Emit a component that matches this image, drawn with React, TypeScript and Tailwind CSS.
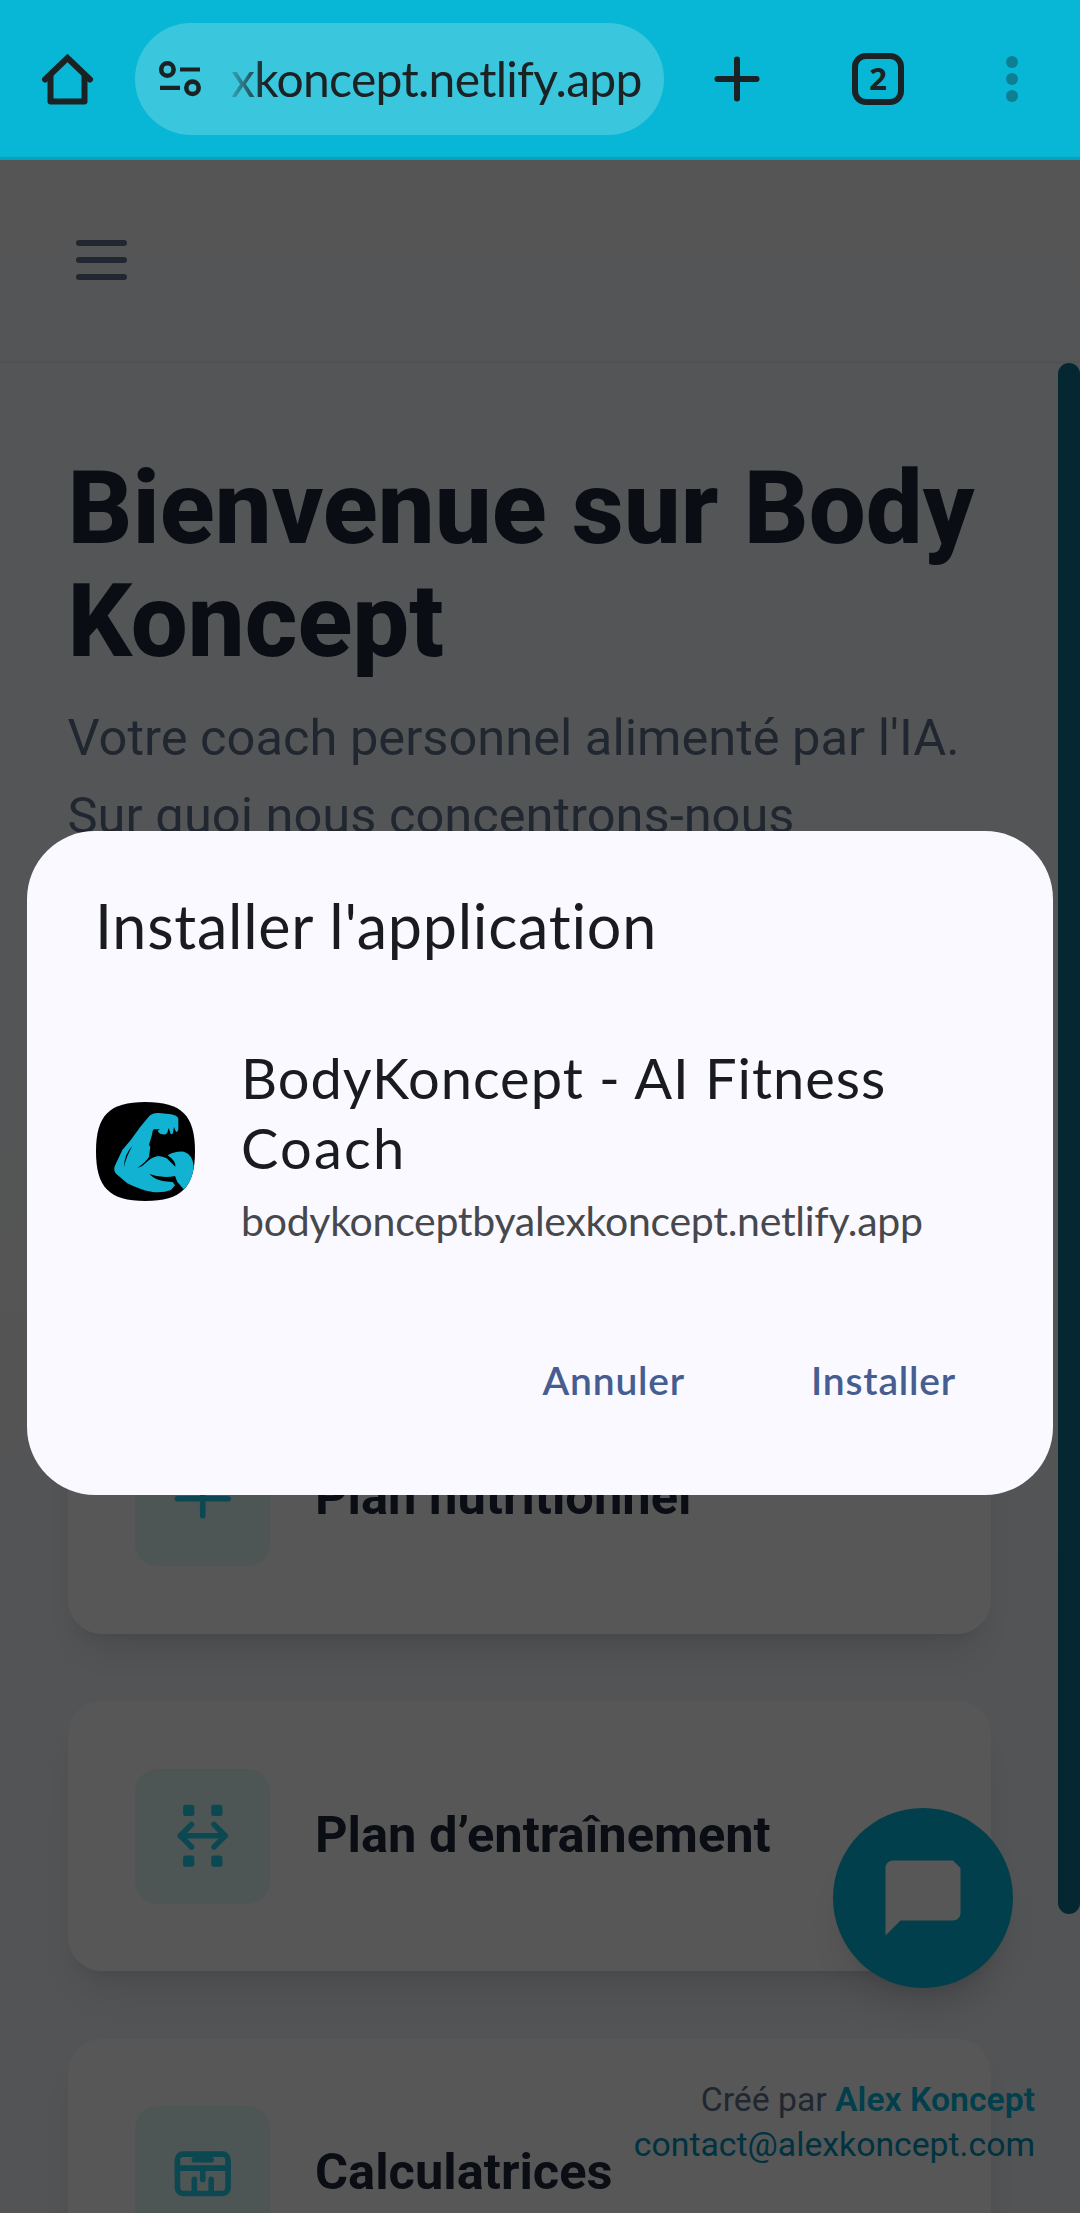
import type { ReactNode } from "react";

function HomeIcon() {
  return (
    <svg width="54" height="54" viewBox="0 0 54 54" fill="none" stroke="#1b2223" strokeWidth="6" strokeLinejoin="round" strokeLinecap="round">
      <path d="M5 27.5 27.5 6 50 27.5" strokeLinejoin="miter" />
      <path d="M10.5 24v25.5h34V24" />
    </svg>
  );
}

function TuneIcon() {
  return (
    <svg width="44" height="38" viewBox="0 0 44 38" fill="none" stroke="#1b2223" strokeWidth="4.6">
      <circle cx="9.4" cy="9.5" r="6.2" />
      <path d="M22 9.5h20M2 27.8h20" strokeWidth="4.2" />
      <circle cx="34.5" cy="27.8" r="6.2" />
    </svg>
  );
}

function BrowserBar() {
  return (
    <header className="flex h-[160px] shrink-0 items-start border-b-[3px] border-[#03a3bf] bg-[#08b6d6]">
      <div className="flex h-[157px] w-full items-center">
        <div className="ml-[40px] flex w-[95px]">
          <HomeIcon />
        </div>
        <div className="flex h-[112px] w-[529px] items-center rounded-full bg-[#3ac6dd] pl-[23px]">
          <TuneIcon />
          <div className="ml-[29px] whitespace-nowrap bg-gradient-to-r from-[#1b2223]/20 via-[#1b2223] via-[34px] to-[#1b2223] bg-clip-text font-[Lato,sans-serif] text-[48px] leading-[60px] tracking-[-0.7px] text-transparent">
            xkoncept.netlify.app
          </div>
        </div>
        <svg className="ml-[47px]" width="52" height="52" viewBox="0 0 52 52" stroke="#1b2223" strokeWidth="6" strokeLinecap="round">
          <path d="M26 6.500v39M6.500 26h39" />
        </svg>
        <div className="ml-[89px] flex h-[52px] w-[52px] items-center justify-center rounded-[14px] border-[6px] border-[#1b2223] font-['Open_Sans',sans-serif] text-[31px] font-bold leading-none text-[#1b2223]">
          2
        </div>
        <div className="ml-[102px] flex flex-col gap-[5px]">
          <span className="size-3 rounded-full bg-[#0c7f93]" />
          <span className="size-3 rounded-full bg-[#0c7f93]" />
          <span className="size-3 rounded-full bg-[#0c7f93]" />
        </div>
      </div>
    </header>
  );
}

function Glyph({ children }: { children: ReactNode }) {
  return (
    <svg width="67.5" height="67.5" viewBox="0 0 24 24" fill="none" stroke="#22d3ee" strokeWidth="2" strokeLinecap="round" strokeLinejoin="round">
      {children}
    </svg>
  );
}

const cards: { title: string; icon: ReactNode }[] = [
  { title: "Plan nutritionnel", icon: <path d="M12 6v12M3 12h18" /> },
  {
    title: "Plan d’entraînement",
    icon: (
      <>
        <path d="M8 8l-4 4 4 4M16 8l4 4-4 4M4 12h16" />
        <g fill="#22d3ee" stroke="none">
          <rect x="5" y="1" width="4" height="4" rx="0.9" />
          <rect x="15" y="1" width="4" height="4" rx="0.9" />
          <rect x="5" y="19" width="4" height="4" rx="0.9" />
          <rect x="15" y="19" width="4" height="4" rx="0.9" />
        </g>
      </>
    ),
  },
  {
    title: "Calculatrices",
    icon: (
      <>
        <rect x="3" y="5" width="18" height="14" rx="2" />
        <path d="M3 10h18M9 7h6M12 10v4M9 14v4M15 14v4" />
      </>
    ),
  },
];

function Card({ title, icon }: { title: string; icon: ReactNode }) {
  return (
    <div className="flex h-[270px] w-[923px] items-center gap-[45px] rounded-[34px] bg-white px-[67.5px] shadow-[0_28px_42px_-8px_rgba(0,0,0,0.1),0_11px_17px_-11px_rgba(0,0,0,0.1)]">
      <div className="flex size-[135px] items-center justify-center rounded-[22.5px] bg-[#e2fbf7]">
        <Glyph>{icon}</Glyph>
      </div>
      <h2 className="-mt-[2px] text-[50.625px] font-bold leading-[78.75px] text-[#1e293b]">{title}</h2>
    </div>
  );
}

function ArmLogo() {
  return (
    <svg className="mt-[13px]" width="99" height="99" viewBox="18 22 297 297">
      <defs>
        <clipPath id="squircle">
          <path d="M166 22C275 22 315 62 315 170S275 319 166 319 18 278 18 170 58 22 166 22Z" />
        </clipPath>
      </defs>
      <g clipPath="url(#squircle)">
        <rect x="18" y="22" width="297" height="297" fill="#000" />
        <path
          fill="#11b2d2"
          d="M178 64Q188 54 206 55L238 58Q264 61 265 74L265 104Q264 113 258 112L252 97 249 114Q247 120 242 118L236 100 232 114Q226 122 218 119 207 118 203 108L210 104 191 104Q187 108 186 120L177 150 181 157 177 186Q172 198 142 220 158 216 168 204 186 186 205 184 218 185 230 191L256 216Q259 200 233 182 255 169 282 171 308 180 311 214 312 240 299 264L283 286 262 262 255 244Q215 252 178 238 196 256 222 260L248 262 255 272 243 286Q220 295 188 292 150 286 112 266L78 237Q70 228 74 215L97 166 124 134 150 98Z"
        />
        <path fill="#000" d="M127 155Q102 178 102 219 108 186 127 155Z" />
      </g>
    </svg>
  );
}

function InstallDialog() {
  return (
    <div className="absolute left-[27px] top-[831px] h-[664px] w-[1026px] rounded-[68px] bg-[#f9f9ff] pl-[69px] pr-[97px] pt-[55px] font-[Lato,sans-serif] text-[#1a1b20]" role="dialog">
      <h3 className="-ml-[1px] text-[61px] leading-[80px] tracking-[0.75px] [font-variant-ligatures:none]">Installer l'application</h3>
      <div className="mt-[77px] flex items-center gap-[46px]">
        <ArmLogo />
        <div className="whitespace-nowrap">
          <p className="text-[56px] leading-[70px] tracking-[0.97px]">
            BodyKoncept - AI Fitness
            <br />
            <span className="tracking-[2.2px]">Coach</span>
          </p>
          <p className="mt-[13px] text-[41px] leading-[50px] tracking-[-0.28px] text-[#47484d]">bodykonceptbyalexkoncept.netlify.app</p>
        </div>
      </div>
      <div className="mt-[108px] flex justify-end gap-[126px] text-[39px] font-semibold leading-[52px] tracking-[0.8px] text-[#465d91]">
        <button>Annuler</button>
        <button>Installer</button>
      </div>
    </div>
  );
}

export default function App() {
  return (
    <div className="relative flex h-[2213px] w-[1080px] flex-col overflow-hidden font-[Roboto,sans-serif]">
      <BrowserBar />
      <div className="relative flex-1 overflow-hidden bg-gradient-to-b from-slate-50 to-[#f3f6fa]">
        <nav className="flex h-[203px] items-start border-b-2 border-slate-200/70 pl-[76px] pt-[80px]">
          <div className="flex flex-col gap-[11px]">
            <span className="h-[6px] w-[51px] rounded-full bg-slate-500" />
            <span className="h-[6px] w-[51px] rounded-full bg-slate-500" />
            <span className="h-[6px] w-[51px] rounded-full bg-slate-500" />
          </div>
        </nav>
        <main className="px-[67.5px] pt-[90px]">
          <h1 className="whitespace-nowrap text-[101.25px] font-extrabold leading-[112.5px] text-[#1e293b]">
            Bienvenue sur Body
            <br />
            Koncept
          </h1>
          <p className="mt-[20.5px] h-[236px] whitespace-nowrap text-[50.625px] leading-[78.75px] text-slate-500">
            Votre coach personnel alimenté par l'IA.
            <br />
            Sur quoi nous concentrons-nous
          </p>
          <div className="mt-[429px] flex flex-col gap-[67.5px]">
            {cards.map((c) => (
              <Card key={c.title} {...c} />
            ))}
          </div>
        </main>

        <div className="absolute right-0 top-[203px] h-[1551px] w-[22px] rounded-full bg-[#0e7490]" />
        <button className="absolute left-[833px] top-[1648px] flex size-[180px] items-center justify-center rounded-full bg-cyan-500 shadow-[0_28px_42px_-8px_rgba(0,0,0,0.1),0_11px_17px_-11px_rgba(0,0,0,0.1)]">
          <svg width="90" height="90" viewBox="0 0 24 24" fill="#fff">
            <path d="M20 2H4c-1.100 0-2 .9-2 2v18l4-4h14c1.100 0 2-.9 2-2V4l-2-2z" />
          </svg>
        </button>
        <footer className="absolute right-[45px] top-[1917px] text-right text-[33.75px] leading-[45px] text-slate-500">
          <div>
            Créé par <span className="font-semibold text-cyan-500">Alex Koncept</span>
          </div>
          <div className="text-cyan-600">contact@alexkoncept.com</div>
        </footer>
        <div className="absolute inset-0 bg-black/66" />
      </div>
      <InstallDialog />
    </div>
  );
}
